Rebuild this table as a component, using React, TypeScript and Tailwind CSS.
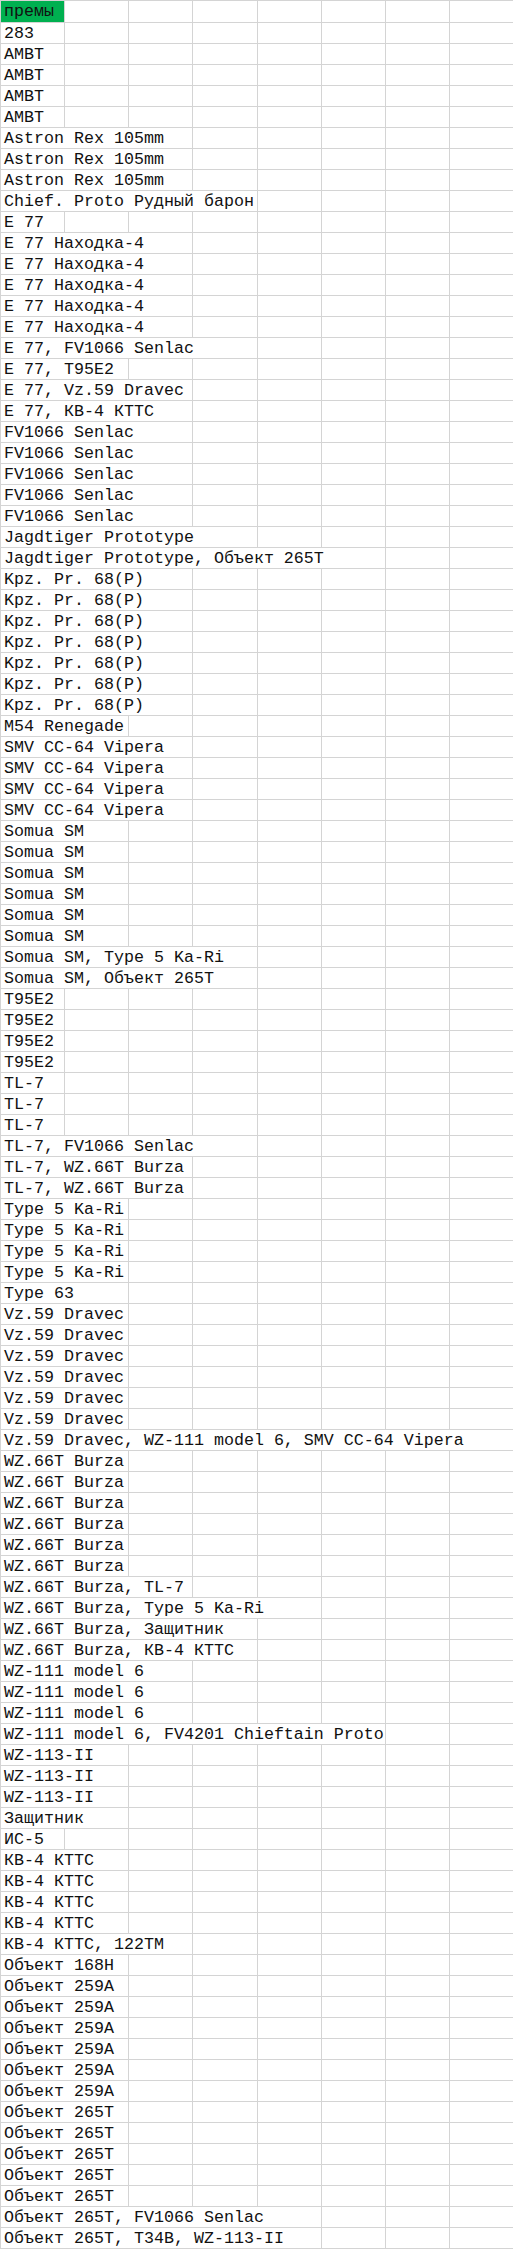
const rep = (text: string, n: number) => Array.from({ length: n }, () => text);

const ROWS: string[] = [
  'премы',
  '283',
  ...rep('AMBT', 4),
  ...rep('Astron Rex 105mm', 3),
  'Chief. Proto Рудный барон',
  'E 77',
  ...rep('E 77 Находка-4', 5),
  'E 77, FV1066 Senlac',
  'E 77, T95E2',
  'E 77, Vz.59 Dravec',
  'E 77, КВ-4 КТТС',
  ...rep('FV1066 Senlac', 5),
  'Jagdtiger Prototype',
  'Jagdtiger Prototype, Объект 265T',
  ...rep('Kpz. Pr. 68(P)', 7),
  'M54 Renegade',
  ...rep('SMV CC-64 Vipera', 4),
  ...rep('Somua SM', 6),
  'Somua SM, Type 5 Ka-Ri',
  'Somua SM, Объект 265T',
  ...rep('T95E2', 4),
  ...rep('TL-7', 3),
  'TL-7, FV1066 Senlac',
  ...rep('TL-7, WZ.66T Burza', 2),
  ...rep('Type 5 Ka-Ri', 4),
  'Type 63',
  ...rep('Vz.59 Dravec', 6),
  'Vz.59 Dravec, WZ-111 model 6, SMV CC-64 Vipera',
  ...rep('WZ.66T Burza', 6),
  'WZ.66T Burza, TL-7',
  'WZ.66T Burza, Type 5 Ka-Ri',
  'WZ.66T Burza, Защитник',
  'WZ.66T Burza, КВ-4 КТТС',
  ...rep('WZ-111 model 6', 3),
  'WZ-111 model 6, FV4201 Chieftain Proto',
  ...rep('WZ-113-II', 3),
  'Защитник',
  'ИС-5',
  ...rep('КВ-4 КТТС', 4),
  'КВ-4 КТТС, 122ТМ',
  'Объект 168Н',
  ...rep('Объект 259А', 6),
  ...rep('Объект 265Т', 5),
  'Объект 265Т, FV1066 Senlac',
  'Объект 265Т, T34B, WZ-113-II',
];

// right edge of each column, text overflows into empty neighbours like in Excel
const EDGES = [64, 128, 192, 257, 321, 385, 449, 513];
const SPAN = ['', 'col-span-1', 'col-span-2', 'col-span-3', 'col-span-4', 'col-span-5', 'col-span-6', 'col-span-7', 'col-span-8'];

function spanFor(text: string) {
  const end = 4 + text.length * 10;
  const i = EDGES.findIndex((e) => end <= e);
  return i === -1 ? 8 : i + 1;
}

function Row({ text, first }: { text: string; first: boolean }) {
  const span = spanFor(text);
  return (
    <div className={`grid grid-cols-[64px_64px_64px_65px_64px_64px_64px_64px] ${first ? 'h-[22px]' : 'h-[21px]'}`}>
      <div
        className={`${SPAN[span]} border-r border-b border-[#d4d4d4] pl-[3px] pt-[1px] whitespace-nowrap overflow-hidden text-[#111] ${
          first ? 'bg-[#00b050]' : ''
        }`}
      >
        {text}
      </div>
      {Array.from({ length: 8 - span }, (_, i) => (
        <div key={i} className="border-r border-b border-[#d4d4d4]" />
      ))}
    </div>
  );
}

export default function App() {
  return (
    <div className="w-[513px] overflow-hidden bg-white">
      <div className="w-[514px] border-l border-t border-[#d4d4d4] font-['Courier_New','Nimbus_Mono_PS','FreeMono','Liberation_Mono',monospace] text-[16.67px] leading-[20px]">
        {ROWS.map((r, i) => (
          <Row key={i} text={r} first={i === 0} />
        ))}
      </div>
    </div>
  );
}
